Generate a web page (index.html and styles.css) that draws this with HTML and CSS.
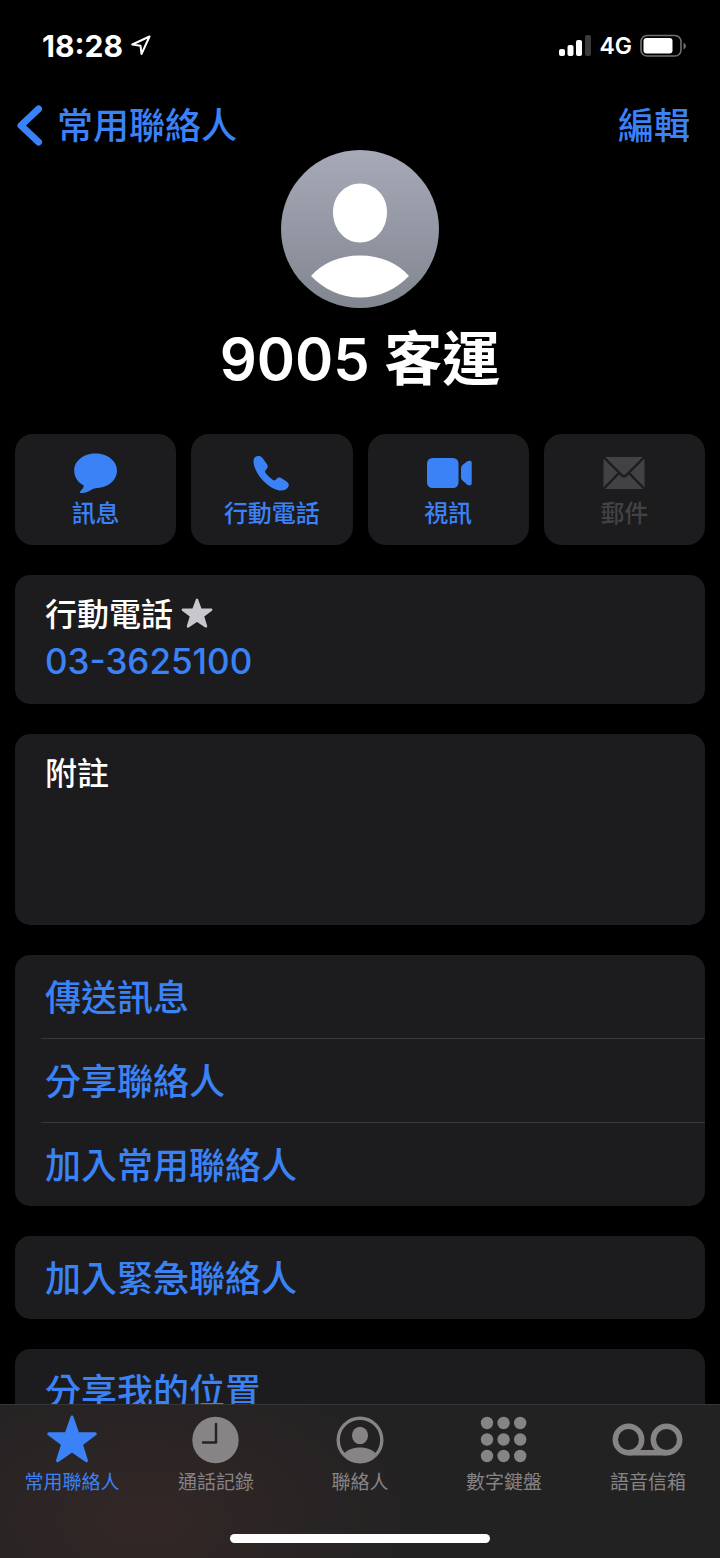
FILE: index.html
```html
<!DOCTYPE html>
<html lang="zh-Hant">
<head>
  <meta charset="UTF-8">
  <meta name="viewport" content="width=device-width, initial-scale=1">
  <title>9005 客運</title>
  <link rel="stylesheet" href="styles.css">
</head>
<body>
  <!-- Status Bar -->
  <div class="status-bar">
    <div class="status-group">
      <span class="time">18:28</span>
      <svg width="20" height="22" viewBox="0 0 20 22" fill="none" stroke="#fff" stroke-width="2" stroke-linejoin="round">
        <path d="M18.500 1.500 L1.300 9.500 L9.500 10.800 L10.500 19 Z"/>
      </svg>
    </div>
    <div class="status-group status-right">
      <svg width="32" height="22" viewBox="0 0 32 22" fill="#fff">
        <rect x="0" y="14" width="6" height="7" rx="2"/>
        <rect x="8.500" y="10" width="6" height="11" rx="2"/>
        <rect x="17" y="5" width="6" height="16" rx="2"/>
        <rect x="26" y="0" width="6" height="21" rx="2" fill="#3a3a3a"/>
      </svg>
      <span class="network">4G</span>
      <svg width="46" height="24" viewBox="0 0 46 24">
        <rect x="1" y="1.500" width="40" height="20.500" rx="6" fill="none" stroke="#707070" stroke-width="1.600"/>
        <rect x="3.500" y="4" width="29" height="15.500" rx="3" fill="#fff"/>
        <path d="M43.500 8.500 Q46 10 46 12 Q46 14 43.500 15.500 Z" fill="#707070"/>
      </svg>
    </div>
  </div>

  <!-- Navigation Bar -->
  <nav class="navbar">
    <a class="back" href="#favorites">
      <svg width="26" height="42" viewBox="0 0 26 42" fill="none" stroke="currentColor" stroke-width="7" stroke-linecap="round" stroke-linejoin="round">
        <path d="M21.500 4 L4 20.500 L21.500 37"/>
      </svg>
      常用聯絡人
    </a>
    <button class="edit" type="button">編輯</button>
  </nav>

  <!-- Contact -->
  <main class="contact">
    <header class="profile">
      <svg class="avatar" viewBox="0 0 158 158">
        <defs>
          <linearGradient id="avatarFill" x1="0" y1="0" x2="0" y2="1">
            <stop offset="0" stop-color="#a6aab8"/>
            <stop offset="1" stop-color="#828690"/>
          </linearGradient>
        </defs>
        <circle cx="79" cy="79" r="79" fill="url(#avatarFill)"/>
        <path d="M79 33.500 C94 33.500 106 46 106 62 C106 79.500 94 92.500 79 92.500 C64 92.500 52 79.500 52 62 C52 46 64 33.500 79 33.500 Z" fill="#fff"/>
        <path d="M30 126 C41 113.500 58 105.500 79 105.500 C100 105.500 117 113.500 128 126 C115 139.500 98 147.500 79 147.500 C60 147.500 43 139.500 30 126 Z" fill="#fff"/>
      </svg>
      <h1>9005 客運</h1>
    </header>

    <div class="actions">
      <button class="action" type="button">
        <svg width="44" height="40" viewBox="0 0 44 40" fill="currentColor">
          <path d="M21.500 0.500 C33.500 0.500 43 8 43 17.500 C43 27.500 33.500 35 21.500 35.200 C18.500 35.700 16.500 37.500 13 39 C10.500 40 8 40.300 6.500 40 C5.500 39.700 5.800 38.700 6.800 37.700 C8.500 36 9.800 34.500 9.800 32.500 C3.800 29.500 0.200 24 0.200 17.500 C0.200 8 9.500 0.500 21.500 0.500 Z"/>
        </svg>
        訊息
      </button>
      <button class="action" type="button">
        <svg width="44" height="40" viewBox="0 0 44 40" fill="currentColor">
          <path d="M5 4.200 C7.500 2.300 10.500 2.500 12.300 4.800 L16.800 11 C18.300 13.200 17.800 15 16.300 16.500 C14.800 17.900 14.700 18.700 15.700 20.200 C17.800 22.700 20.500 25.200 23 27 C24.300 27.800 25.300 27.300 26.500 26 C28 24.300 30 24.200 32 25.400 L36.800 28.800 C39 30.300 39.300 32.300 38 34.300 C35 38.500 29.500 38.500 23 35.200 C16 31.500 10 25.200 6.500 18.500 C3.300 12.300 2.500 6.500 5 4.200 Z"/>
        </svg>
        行動電話
      </button>
      <button class="action" type="button">
        <svg width="46" height="40" viewBox="0 0 46 40" fill="currentColor">
          <rect x="2" y="5" width="31.500" height="30" rx="5.500"/>
          <path d="M36 15.500 C36 14 36.500 13 37.500 12 L42 8.500 C44 7.200 46.700 7.500 46.700 9.500 L46.700 30.500 C46.700 32.500 44 33 42 31.500 L37.500 27.500 C36.500 26.700 36 25.700 36 24.500 Z"/>
        </svg>
        視訊
      </button>
      <button class="action" type="button" disabled>
        <svg width="42" height="40" viewBox="0 0 42 40">
          <rect x="0.500" y="4" width="41" height="32" rx="2.500" fill="currentColor"/>
          <path d="M0 3.500 L17.500 21 Q21 25.500 24.500 21 L42 3.500 M0 36.500 L16 20 M42 36.500 L26 20" fill="none" stroke="#1c1c1e" stroke-width="2.400"/>
        </svg>
        郵件
      </button>
    </div>

    <section class="card phone">
      <h2>
        行動電話
        <svg width="32" height="34" viewBox="0 0 50 54" fill="#c7c7cc" stroke="#c7c7cc" stroke-width="4" stroke-linejoin="round">
          <path d="M25 3 L30.700 18.500 L47.500 18.800 L34.300 28.700 L39.300 45 L25 35.500 L10.700 45 L15.700 28.700 L2.500 18.800 L19.300 18.500 Z"/>
        </svg>
      </h2>
      <a href="tel:033625100">03-3625100</a>
    </section>

    <section class="card notes">
      <label for="notes">附註</label>
      <textarea id="notes" rows="3"></textarea>
    </section>

    <section class="card list">
      <button type="button">傳送訊息</button>
      <button type="button">分享聯絡人</button>
      <button type="button">加入常用聯絡人</button>
    </section>

    <section class="card list">
      <button type="button">加入緊急聯絡人</button>
    </section>

    <section class="card list">
      <button type="button">分享我的位置</button>
    </section>
  </main>

  <!-- Tab Bar -->
  <footer class="tab-bar">
    <nav class="tabs">
      <a class="tab active" href="#favorites">
        <svg width="50" height="48" viewBox="0 0 50 48" fill="currentColor" stroke="currentColor" stroke-width="3" stroke-linejoin="round">
          <path d="M25 1 L30.700 17.500 L48.300 17.800 L34.300 28.200 L39.500 44.700 L25 34.700 L10.500 44.700 L15.700 28.200 L1.700 17.800 L19.300 17.500 Z"/>
        </svg>
        常用聯絡人
      </a>
      <a class="tab" href="#recents">
        <svg width="48" height="48" viewBox="0 0 48 48">
          <circle cx="23.500" cy="24" r="23.200" fill="currentColor"/>
          <path d="M24 8 L24 26.500 L11 26.500" fill="none" stroke="#252323" stroke-width="2.500" stroke-linecap="round" stroke-linejoin="round"/>
        </svg>
        通話記錄
      </a>
      <a class="tab" href="#contacts">
        <svg width="48" height="48" viewBox="0 0 48 48">
          <defs>
            <clipPath id="personClip"><circle cx="24" cy="24" r="22"/></clipPath>
          </defs>
          <circle cx="24" cy="24" r="21.800" fill="none" stroke="currentColor" stroke-width="3.400"/>
          <g fill="currentColor" clip-path="url(#personClip)">
            <ellipse cx="24" cy="19.500" rx="8" ry="8.700"/>
            <path d="M7 39 C11 33.500 17 31.500 24 31.500 C31 31.500 37 33.500 41 39 L38 47 L10 47 Z"/>
          </g>
        </svg>
        聯絡人
      </a>
      <a class="tab" href="#keypad">
        <svg width="48" height="48" viewBox="0 0 48 48" fill="currentColor">
          <circle cx="7" cy="7" r="6.200"/><circle cx="23.600" cy="7" r="6.200"/><circle cx="40.200" cy="7" r="6.200"/>
          <circle cx="7" cy="23.500" r="6.200"/><circle cx="23.600" cy="23.500" r="6.200"/><circle cx="40.200" cy="23.500" r="6.200"/>
          <circle cx="7" cy="40" r="6.200"/><circle cx="23.600" cy="40" r="6.200"/><circle cx="40.200" cy="40" r="6.200"/>
        </svg>
        數字鍵盤
      </a>
      <a class="tab" href="#voicemail">
        <svg width="72" height="48" viewBox="0 0 72 48" fill="none" stroke="currentColor" stroke-width="5.500">
          <circle cx="16.500" cy="23.500" r="13.200"/>
          <circle cx="54.500" cy="23.500" r="13.200"/>
          <path d="M16.500 36.700 L54.500 36.700"/>
        </svg>
        語音信箱
      </a>
    </nav>
    <div class="home-indicator"></div>
  </footer>
</body>
</html>
```
FILE: styles.css
```css
/* Global Styles */
* {
  box-sizing: border-box;
  margin: 0;
  padding: 0;
}
body {
  height: 100vh;
  display: flex;
  flex-direction: column;
  background: #000;
  color: #fff;
  font-family: Inter, "Noto Sans CJK TC", sans-serif;
  font-weight: 500;
  overflow: hidden;
}
svg {
  display: block;
  flex-shrink: 0;
  overflow: visible;
}
button, textarea {
  font: inherit;
  color: inherit;
  background: none;
  border: none;
}
button {
  cursor: pointer;
}
a {
  color: #3b82f7;
  text-decoration: none;
}

/* Status Bar */
.status-bar {
  display: flex;
  justify-content: space-between;
  align-items: center;
  height: 92px;
  padding: 0 34px 0 42px;
}
.status-group {
  display: flex;
  align-items: center;
  gap: 8px;
}
.time {
  font-size: 30px;
  font-weight: 700;
}
.network {
  font-size: 23px;
  font-weight: 600;
}

/* Navigation Bar */
.navbar {
  display: flex;
  justify-content: space-between;
  align-items: center;
  height: 58px;
  padding: 10px 30px 0 17px;
  font-size: 36px;
  line-height: 50px;
}
.back {
  display: flex;
  align-items: center;
  gap: 14px;
}
.edit {
  color: #3b82f7;
}

/* Contact */
.contact {
  flex: 1;
  min-height: 0;
  display: flex;
  flex-direction: column;
  gap: 30px;
  padding: 0 15px;
  overflow-y: auto;
  scrollbar-width: none;
}
.contact > * {
  flex-shrink: 0;
}
.profile {
  display: flex;
  flex-direction: column;
  align-items: center;
  gap: 8px;
  padding-bottom: 2px;
}
.avatar {
  width: 158px;
  height: 158px;
}
.profile h1 {
  font-size: 58px;
  font-weight: 600;
  line-height: 86px;
}

/* Action Buttons */
.actions {
  display: grid;
  grid-template-columns: repeat(4, 1fr);
  gap: 15px;
}
.action {
  display: flex;
  flex-direction: column;
  align-items: center;
  height: 111px;
  padding-top: 19px;
  border-radius: 18px;
  background: #1c1c1e;
  color: #3b82f7;
  font-size: 24px;
  line-height: 42px;
}
.action:disabled {
  color: #424246;
  cursor: default;
}

/* Cards */
.card {
  border-radius: 15px;
  background: #1c1c1e;
}
.phone {
  padding: 16px 30px 19px;
  font-size: 35px;
  line-height: 47px;
}
.phone h2 {
  display: flex;
  align-items: center;
  gap: 8px;
  font-size: 32px;
  font-weight: 500;
}
.phone a {
  display: block;
}
.notes {
  display: flex;
  flex-direction: column;
  height: 191px;
  padding: 16px 30px;
  font-size: 32px;
  line-height: 47px;
}
.notes textarea {
  flex: 1;
  width: 100%;
  resize: none;
  outline: none;
}
.list {
  overflow: hidden;
}
.list button {
  display: block;
  width: 100%;
  height: 83px;
  padding: 0 30px 4px;
  color: #3b82f7;
  font-size: 36px;
  text-align: left;
}
.list button + button {
  height: 84px;
  border-top: 1px solid #38383a;
  border-image: linear-gradient(to right, transparent 27px, #38383a 27px) 1;
}

/* Tab Bar */
.tab-bar {
  height: 154px;
  display: flex;
  flex-direction: column;
  justify-content: space-between;
  align-items: center;
  padding: 11px 0 15px;
  border-top: 1px solid #363638;
  background: radial-gradient(ellipse 40% 110% at 20% 75%, #332726, #222223);
}
.tabs {
  display: grid;
  grid-template-columns: repeat(5, 1fr);
  width: 100%;
}
.tab {
  display: flex;
  flex-direction: column;
  align-items: center;
  gap: 5px;
  color: #868484;
  font-size: 19px;
  font-weight: 400;
  line-height: 28px;
}
.tab.active {
  color: #3b82f7;
}
.home-indicator {
  width: 36%;
  height: 9px;
  border-radius: 5px;
  background: #fff;
}
```
